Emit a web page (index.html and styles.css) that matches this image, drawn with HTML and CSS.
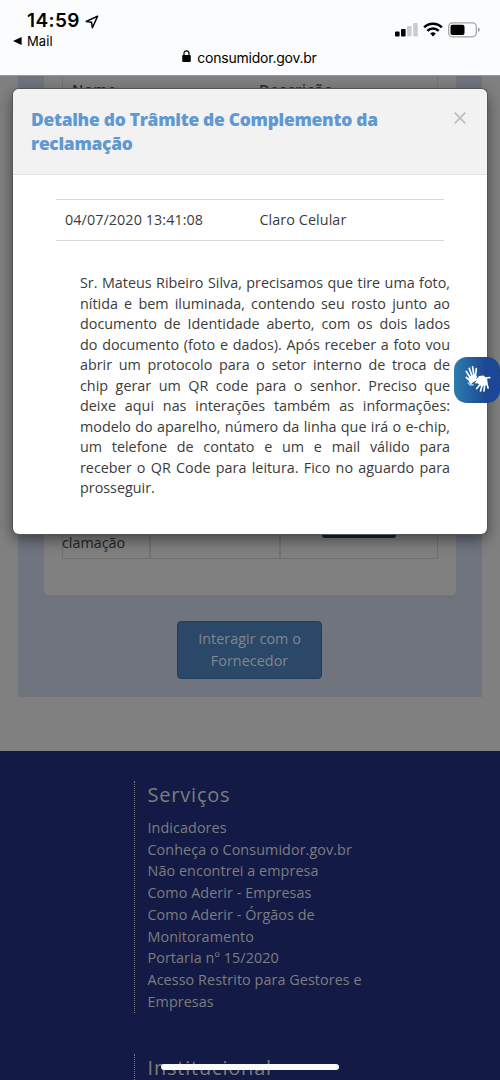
FILE: index.html
```html
<!DOCTYPE html>
<html lang="pt-BR">
<head>
<meta charset="utf-8">
<meta name="viewport" content="width=device-width">
<title>Consumidor.gov.br</title>
<link rel="stylesheet" href="styles.css">
</head>
<body>
<header class="status">
  <div class="status-left">
    <div class="clock"><span>14:59</span>
      <svg width="14" height="14" viewBox="0 0 14 14"><path d="M12.600 1.200 1.200 6.400l5.300.9.9 5.400z" fill="none" stroke="#000" stroke-width="1.500" stroke-linejoin="round"/></svg>
    </div>
    <div class="back"><svg width="9" height="8" viewBox="0 0 9 8"><path d="M0 4 8.600 0v8z"/></svg><span>Mail</span></div>
  </div>
  <div class="signals">
    <svg width="24" height="15" viewBox="0 0 24 15"><rect x="0" y="9.500" width="4.600" height="5" rx="1"/><rect x="6" y="7" width="4.600" height="7.500" rx="1"/><rect x="12" y="4" width="4.600" height="10.500" rx="1" fill="#ccc"/><rect x="18.200" y="1" width="4.600" height="13.500" rx="1" fill="#ccc"/></svg>
    <svg class="wifi" width="20" height="15" viewBox="0 0 20 15"><g fill="none" stroke="#000" stroke-width="2.600"><path d="M1.200 5.400a12.500 12.500 0 0 1 17.600 0"/><path d="M4.300 8.900a8 8 0 0 1 11.400 0"/></g><path d="m10 14.500-2.800-2.900a4.200 4.200 0 0 1 5.600 0z"/></svg>
    <svg class="battery" width="32" height="16" viewBox="0 0 32 16"><rect x=".6" y=".8" width="27.800" height="14" rx="4" fill="none" stroke="#a3a3a3" stroke-width="1.200"/><rect x="2.500" y="2.700" width="14" height="10.300" rx="2"/><path d="M30 5.600c2.300.8 2.300 3.700 0 4.500z" fill="#999"/></svg>
  </div>
  <div class="address"><svg width="9" height="12" viewBox="0 0 9 12"><rect x=".2" y="5" width="8.600" height="7" rx="1"/><path d="M2 5.500V3.300a2.500 2.500 0 0 1 5 0v2.200" fill="none" stroke="#000" stroke-width="1.200"/></svg><span>consumidor.gov.br</span></div>
</header>
<main class="page">
  <section class="panel">
    <div class="card">
      <div class="grid-head"><span>Nome</span><span>Descrição</span></div>
      <div class="grid-row"><div>clamação</div><div></div><div><span class="action"></span></div></div>
    </div>
    <a class="interact">Interagir com o<br>Fornecedor</a>
  </section>
</main>
<footer class="footer">
  <section class="links">
    <h2>Serviços</h2>
    <ul><li>Indicadores</li><li>Conheça o Consumidor.gov.br</li><li>Não encontrei a empresa</li><li>Como Aderir - Empresas</li><li>Como Aderir - Órgãos de<br>Monitoramento</li><li>Portaria nº 15/2020</li><li>Acesso Restrito para Gestores e<br>Empresas</li></ul>
  </section>
  <section class="links"><h2>Institucional</h2></section>
</footer>
<div class="modal">
  <div class="modal-head"><h1>Detalhe do Trâmite de Complemento da<br>reclamação</h1>
    <svg width="12" height="12" viewBox="0 0 12 12"><path d="m.7.700 10.600 10.600M11.300.7.700 11.300" stroke="#c0c0c0" stroke-width="1.800"/></svg></div>
  <div class="entry"><span>04/07/2020 13:41:08</span><span>Claro Celular</span></div>
  <div class="message">
    <div>Sr. Mateus Ribeiro Silva, precisamos que tire uma foto,</div>
    <div>nítida e bem iluminada, contendo seu rosto junto ao</div>
    <div>documento de Identidade aberto, com os dois lados</div>
    <div>do documento (foto e dados). Após receber a foto vou</div>
    <div>abrir um protocolo para o setor interno de troca de</div>
    <div>chip gerar um QR code para o senhor. Preciso que</div>
    <div>deixe aqui nas interações também as informações:</div>
    <div>modelo do aparelho, número da linha que irá o e-chip,</div>
    <div>um telefone de contato e um e mail válido para</div>
    <div>receber o QR Code para leitura. Fico no aguardo para</div>
    <div>prosseguir.</div>
  </div>
</div>
<div class="libras"><svg width="26" height="28" viewBox="0 0 26 28"><g fill="none" stroke="#fff" stroke-linecap="round" stroke-linejoin="round" stroke-width="1.700"><path d="M4.800 12 1.300 6.500M6.800 10.500 4.200 3.300M8.800 10 7.600 1.800M10.500 10.500l.8-7M4.800 15.500 1.300 12.500"/><path d="M15.500 19l-3.800 4.500M17.500 19l-2 7M19.700 19l-.7 7M21.500 17.500l1.600 5.500M21 13l3.800-.5"/></g><path d="m4 11.500 5.800-2.200 2.200 2-.8 3 3-3.200 4.400-.6 3.600 3.500.4 4-2 2.500-5.400.2-2-2.200-3.700-.2 2.300-2.700-3.800 1.700-2 2.200-2-2.500z" fill="#fff"/><path d="M3 17.500c.8 2 3.300 2.900 5.800 2" fill="none" stroke="#a8cae4" stroke-width="1.800"/></svg></div>
<div class="home-bar"></div>
</body>
</html>
```
FILE: styles.css
```css
* { box-sizing: border-box; }
body { margin: 0; width: 500px; height: 1080px; overflow: hidden; position: relative; background: #808080; font: 14.35px/20.5px "Open Sans", sans-serif; color: #3b3b3b; }
svg { display: block; flex: none; }
.status { height: 76px; background: #fbfcfd; border-bottom: 1px solid #98999a; color: #000; font-family: Inter, sans-serif; display: grid; grid-template: 50px 25px / 1fr 1fr; }
.status-left { padding: 11px 0 0 13px; }
.clock { display: flex; align-items: center; gap: 5px; padding-left: 14px; height: 21px; font-size: 19px; font-weight: 600; letter-spacing: .4px; }
.back { display: flex; align-items: center; gap: 5px; height: 18px; font-size: 13px; letter-spacing: .1px; }
.signals { display: flex; justify-content: flex-end; align-items: flex-start; padding: 22px 20px 0 0; }
.wifi { margin: 0 5px 0 4px; }
.address { grid-column: 1 / 3; display: flex; justify-content: center; align-items: flex-start; gap: 6px; height: 18px; line-height: 15px; font-size: 14px; letter-spacing: -.23px; padding-right: 1px; }
.page { height: 675px; padding: 0 18px; background: #808080; }
.panel { height: 621px; padding: 0 25px; background: #70747f; }
.card { height: 520px; padding: 0 18px; border: 1px solid #747577; border-top: 0; border-radius: 0 0 5px 5px; background: #808080; box-shadow: 0 1px 1px #6b6d72; display: flex; flex-direction: column; justify-content: space-between; }
.grid-head { display: grid; grid-template-columns: 187px 1fr; height: 28px; padding: 4px 10px 0 9px; border: solid #747474; border-width: 0 1px; font-weight: 600; letter-spacing: .8px; color: #292929; }
.grid-row { display: grid; grid-template-columns: 86px 130px 1fr; height: 50px; margin-bottom: 36px; border: 1px solid #707070; color: #242424; }
.grid-row > div { padding-top: 23px; margin-left: -1px; }
.grid-row > div + div { margin-left: 0; border-left: 2px solid #737373; }
.grid-row > div:last-child { padding: 0 0 0 41px; }
.action { display: block; width: 74px; height: 28px; border-radius: 3px; background: #10263b; }
.interact { display: block; width: 145px; height: 58px; margin: 25px auto 0 134px; padding-top: 6px; border: 1px solid #243e59; border-radius: 4px; background: #2b4869; color: #7f878e; text-align: center; line-height: 22px; letter-spacing: .05px; }
.footer { height: 329px; padding: 30px 134px 0; background: #141a46; color: #7c7d7d; }
.links { width: 240px; padding-left: 12.5px; border-left: 1px dotted #797a82; letter-spacing: .08px; line-height: 21.7px; height: 232px; }
.links + .links { margin-top: 41px; height: 40px; }
.links h2 { margin: 0; height: 36px; font-size: 20px; line-height: 28px; font-weight: 500; letter-spacing: .8px; }
.links ul { margin: 0; padding: 0; list-style: none; white-space: nowrap; }
.modal { position: absolute; left: 13px; top: 89px; width: 474px; height: 445px; border-radius: 6px; overflow: hidden; background: #fff; box-shadow: 0 0 0 1px #555, 0 5px 15px rgba(0,0,0,.5); }
.modal-head { display: flex; justify-content: space-between; height: 86px; padding: 18px 21px 0 18px; background: #f2f2f2; border-bottom: 1px solid #e4e4e4; }
.modal-head h1 { margin: 0; font-size: 17.4px; line-height: 24px; font-weight: 800; letter-spacing: -.27px; color: #6098d2; white-space: nowrap; }
.modal-head svg { margin-top: 5px; }
.entry { display: grid; grid-template-columns: 194.500px 1fr; margin: 24px 43px 0; height: 42px; border: solid #d8d8d8; border-width: 1px 0; padding: 10px 9px; letter-spacing: .08px; }
.message { padding: 32px 37px 0 67px; text-align: justify; text-align-last: justify; white-space: nowrap; }
.message div:last-child { text-align-last: left; }
.libras { position: absolute; left: 454px; top: 357px; width: 46px; height: 46px; border-radius: 13px; background: linear-gradient(90deg, #2c7dae, #1b4794 70%); padding: 8px 0 0 11px; }
.home-bar { position: absolute; left: 161px; top: 1064px; width: 178px; height: 6px; border-radius: 3px; background: #fafafa; }
```
